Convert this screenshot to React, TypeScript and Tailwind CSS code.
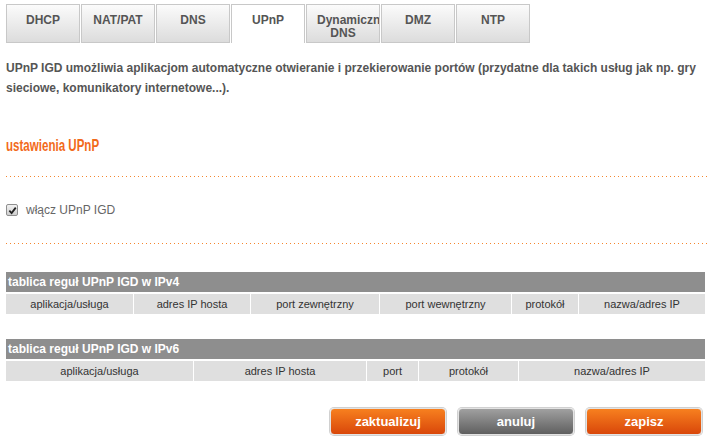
import * as React from "react"

const tabs = ["DHCP", "NAT/PAT", "DNS", "UPnP", "Dynamiczny DNS", "DMZ", "NTP"]

const ipv4Cols = [
  { label: "aplikacja/usługa", w: "w-[127px]" },
  { label: "adres IP hosta", w: "w-[116px]" },
  { label: "port zewnętrzny", w: "w-[128px]" },
  { label: "port wewnętrzny", w: "w-[131px]" },
  { label: "protokół", w: "w-[66px]" },
  { label: "nazwa/adres IP", w: "w-[126px]" },
]

const ipv6Cols = [
  { label: "aplikacja/usługa", w: "w-[187px]" },
  { label: "adres IP hosta", w: "w-[172px]" },
  { label: "port", w: "w-[51px]" },
  { label: "protokół", w: "w-[99px]" },
  { label: "nazwa/adres IP", w: "w-[186px]" },
]

function Dotted() {
  return <div className="h-px w-[704px] bg-[linear-gradient(to_right,#f5862e_1px,transparent_1px)] bg-[length:4px_1px]" />
}

function RuleTable({ title, cols }: { title: string; cols: { label: string; w: string }[] }) {
  return (
    <div className="w-[699px]">
      <div className="h-[20px] bg-[#8e8e8e] pl-[2px] text-[12px] leading-[20px] font-bold text-white">{title}</div>
      <div className="mt-[2px] flex gap-px">
        {cols.map((c) => (
          <div key={c.label} className={`${c.w} h-[20px] bg-[#dfdfdf] text-center text-[11px] leading-[20px] text-[#333]`}>
            {c.label}
          </div>
        ))}
      </div>
    </div>
  )
}

export default function App() {
  return (
    <div className="w-[716px] h-[438px] bg-white px-[6px] pt-[4px] font-['Liberation_Sans',Arial,sans-serif] overflow-hidden">
      {/* Tabs */}
      <div className="flex gap-px h-[39px]">
        {tabs.map((t) => {
          const active = t === "UPnP"
          return (
            <div
              key={t}
              className={
                active
                  ? "w-[74px] border border-b-0 border-[#c8c8c8] bg-white pt-[9px] text-center text-[12px] leading-[13px] font-bold text-[#555] overflow-hidden"
                  : "w-[74px] border border-[#c8c8c8] bg-[linear-gradient(to_bottom,#fbfbfb,#dcdcdc)] px-[10px] pt-[9px] text-center text-[12px] leading-[13px] font-bold text-[#555] overflow-hidden"
              }
            >
              {t}
            </div>
          )
        })}
      </div>

      {/* Description */}
      <p className="mt-[15px] text-[12px] leading-[20px] font-bold text-[#555] font-['Liberation_Sans_Narrow','Liberation_Sans',sans-serif]">
        UPnP IGD umożliwia aplikacjom automatyczne otwieranie i przekierowanie portów (przydatne dla takich usług jak np. gry
        sieciowe, komunikatory internetowe...).
      </p>

      <div className="mt-[36px] h-[20px]">
        <span className="inline-block origin-left scale-x-[0.68] whitespace-nowrap text-[17px] leading-[20px] font-bold text-[#f26a1b]">
          ustawienia UPnP
        </span>
      </div>

      <div className="mt-[22px]">
        <Dotted />
      </div>

      <label className="mt-[23px] flex h-[20px] items-center gap-[8px] text-[12px] text-[#666]">
        <span className="flex h-[12px] w-[12px] items-center justify-center rounded-[2px] border border-[#8f8f8f] bg-[linear-gradient(to_bottom,#f2f2f2,#cfcfcf)]">
          <svg viewBox="0 0 10 10" className="h-[9px] w-[9px]">
            <path d="M1.5 5.2 L4 7.8 L8.6 1.8" fill="none" stroke="#222" strokeWidth="2" />
          </svg>
        </span>
        włącz UPnP IGD
      </label>

      <div className="mt-[23px]">
        <Dotted />
      </div>

      <div className="mt-[28px]">
        <RuleTable title="tablica reguł UPnP IGD w IPv4" cols={ipv4Cols} />
      </div>

      <div className="mt-[25px]">
        <RuleTable title="tablica reguł UPnP IGD w IPv6" cols={ipv6Cols} />
      </div>

      {/* Buttons */}
      <div className="mt-[27px] mr-[8px] flex justify-end gap-[12px]">
        <button className="h-[27px] w-[116px] rounded-[4px] border border-[#e3e3e3] bg-[linear-gradient(to_bottom,#f7801f,#d9470a)] text-[13px] font-bold text-white shadow-[0_0_0_1px_#d0d0d0]">
          zaktualizuj
        </button>
        <button className="h-[27px] w-[116px] rounded-[4px] border border-[#e3e3e3] bg-[linear-gradient(to_bottom,#a0a0a0,#5f5f5f)] text-[13px] font-bold text-white shadow-[0_0_0_1px_#d0d0d0]">
          anuluj
        </button>
        <button className="h-[27px] w-[116px] rounded-[4px] border border-[#e3e3e3] bg-[linear-gradient(to_bottom,#f7801f,#d9470a)] text-[13px] font-bold text-white shadow-[0_0_0_1px_#d0d0d0]">
          zapisz
        </button>
      </div>
    </div>
  )
}
